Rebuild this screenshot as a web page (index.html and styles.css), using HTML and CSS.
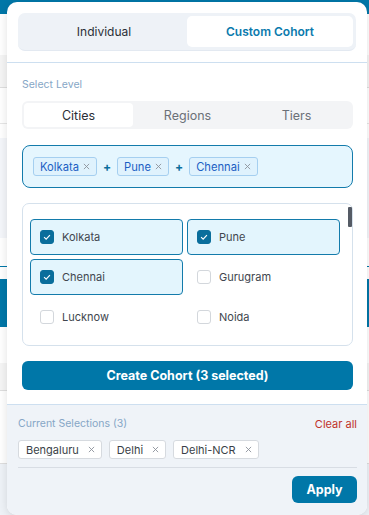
FILE: index.html
```html
<!DOCTYPE html>
<html lang="en">
<head>
    <meta charset="UTF-8">
    <meta name="viewport" content="width=device-width, initial-scale=1.0">
    <title>Custom Cohort</title>
    <link rel="stylesheet" href="styles.css">
</head>
<body>

    <!-- page behind the popover -->
    <div class="page">
        <div class="topbar"></div>
        <div class="band band-white-1"></div>
        <div class="band band-grey-1"></div>
        <div class="band band-white-2"></div>
        <div class="band band-light"></div>
        <div class="band band-white-3"></div>
        <div class="band band-blue"></div>
        <div class="band band-white-4"></div>
        <div class="band band-grey-2"></div>
        <div class="band band-white-5"></div>
        <div class="band band-foot"></div>
    </div>

    <div class="cohort-popover">
        <div class="mode-tabs">
            <button class="mode-tab">Individual</button>
            <button class="mode-tab active">Custom Cohort</button>
        </div>

        <div class="popover-body">
            <p class="field-label">Select Level</p>
            <div class="level-tabs">
                <button class="level-tab active">Cities</button>
                <button class="level-tab">Regions</button>
                <button class="level-tab">Tiers</button>
            </div>

            <div class="cohort-preview">
                <span class="preview-chip">Kolkata <svg class="chip-x" viewBox="0 0 8 8"><path d="M1 1L7 7M7 1L1 7"/></svg></span>
                <span class="plus">+</span>
                <span class="preview-chip">Pune <svg class="chip-x" viewBox="0 0 8 8"><path d="M1 1L7 7M7 1L1 7"/></svg></span>
                <span class="plus">+</span>
                <span class="preview-chip">Chennai <svg class="chip-x" viewBox="0 0 8 8"><path d="M1 1L7 7M7 1L1 7"/></svg></span>
            </div>

            <div class="city-list-wrap">
                <div class="city-list">
                    <label class="city-option checked"><span class="check"><svg viewBox="0 0 14 14"><path d="M3.6 7.2L6 9.5L10.4 4.8"/></svg></span>Kolkata</label>
                    <label class="city-option checked"><span class="check"><svg viewBox="0 0 14 14"><path d="M3.6 7.2L6 9.5L10.4 4.8"/></svg></span>Pune</label>
                    <label class="city-option checked"><span class="check"><svg viewBox="0 0 14 14"><path d="M3.6 7.2L6 9.5L10.4 4.8"/></svg></span>Chennai</label>
                    <label class="city-option"><span class="check"></span>Gurugram</label>
                    <label class="city-option"><span class="check"></span>Lucknow</label>
                    <label class="city-option"><span class="check"></span>Noida</label>
                </div>
                <div class="scroll-thumb"></div>
            </div>

            <button class="create-btn">Create Cohort (3 selected)</button>
        </div>

        <div class="selections">
            <div class="selections-head">
                <span class="field-label">Current Selections (3)</span>
                <a href="#" class="clear-all">Clear all</a>
            </div>
            <div class="selection-chips">
                <span class="sel-chip">Bengaluru <svg class="chip-x" viewBox="0 0 8 8"><path d="M1 1L7 7M7 1L1 7"/></svg></span>
                <span class="sel-chip">Delhi <svg class="chip-x" viewBox="0 0 8 8"><path d="M1 1L7 7M7 1L1 7"/></svg></span>
                <span class="sel-chip">Delhi-NCR <svg class="chip-x" viewBox="0 0 8 8"><path d="M1 1L7 7M7 1L1 7"/></svg></span>
            </div>
            <div class="selections-foot">
                <button class="apply-btn">Apply</button>
            </div>
        </div>
    </div>

</body>
</html>
```

FILE: styles.css
```css
* {
    margin: 0;
    padding: 0;
    box-sizing: border-box;
    font-family: "Inter", "Liberation Sans", sans-serif;
}

body {
    background: #fff;
    overflow: hidden;
    height: 515px;
    position: relative;
}

button {
    border: none;
    background: none;
    cursor: pointer;
    font: inherit;
}

/* Page behind the popover */
.topbar {
    height: 14px;
    background: #0077a8;
}

.band-white-1 { height: 41px; }
.band-grey-1 { height: 33px; background: #f5f5f5; border-bottom: 1px solid #dedede; }
.band-white-2 { height: 36px; border-bottom: 1px solid #e6e6e6; }
.band-white-3 { height: 29px; border-bottom: 1px solid #0077a8; }
.band-light { height: 100px; margin-top: 14px; background: #f4f6fa; }
.band-blue { height: 48px; margin-top: 12px; background: #0077a8; }
.band-white-4 { height: 36px; }
.band-grey-2 { height: 28px; background: #f5f5f5; border-bottom: 1px solid #dedede; }
.band-white-5 { height: 73px; border-bottom: 1px solid #dedede; }
.band-foot { height: 60px; background: #eef2f7; }

/* Popover */
.cohort-popover {
    position: absolute;
    top: 2px;
    left: 7px;
    width: 360px;
    height: 513px;
    background: #fff;
    border-radius: 10px;
    box-shadow: 0 2px 10px rgba(0, 0, 0, 0.12);
    display: flex;
    flex-direction: column;
    overflow: hidden;
}

.mode-tabs {
    display: flex;
    margin: 11px 11px 0;
    padding: 3px;
    height: 38px;
    background: #eef2f7;
    border-radius: 7px;
    border-bottom: 1px solid #e3e9f1;
}

.mode-tab {
    flex: 1;
    font-size: 12px;
    color: #2b2f36;
    border-radius: 5px;
}

.mode-tab.active {
    background: #fff;
    color: #0a7aad;
    font-weight: 600;
}

.popover-body {
    margin-top: 11px;
    border-top: 1px solid #cddff0;
    padding: 15px 14px 0 15px;
}

.field-label {
    font-size: 10.5px;
    line-height: 14px;
    color: #86a6c6;
}

.level-tabs {
    display: flex;
    margin-top: 9px;
    padding: 2px;
    height: 28px;
    background: #f3f4f6;
    border-radius: 6px;
}

.level-tab {
    flex: 1;
    font-size: 12.5px;
    color: #6b7078;
    border-radius: 4px;
}

.level-tab.active {
    background: #fff;
    color: #2b2f36;
}

.cohort-preview {
    display: flex;
    align-items: center;
    gap: 6px;
    margin-top: 16px;
    height: 43px;
    padding: 0 10px;
    background: #e5f6fe;
    border: 1px solid #137bab;
    border-radius: 8px;
}

.preview-chip {
    display: inline-flex;
    align-items: center;
    gap: 4px;
    height: 19px;
    padding: 0 6px;
    font-size: 11.2px;
    color: #1c5fc4;
    background: #dff2fd;
    border: 1px solid #a5cff0;
    border-radius: 3px;
}

.chip-x {
    width: 7px;
    height: 7px;
    fill: none;
    stroke: #8a9099;
    stroke-width: 1;
}

.plus {
    font-size: 12px;
    font-weight: 700;
    color: #0a6e9c;
}

/* City checklist */
.city-list-wrap {
    position: relative;
    margin-top: 15px;
}

.city-list {
    display: grid;
    grid-template-columns: 1fr 1fr;
    grid-auto-rows: 36px;
    gap: 4px;
    height: 143px;
    padding: 15px 12px 11px 7px;
    border: 1px solid #d5e1ec;
    border-radius: 7px;
    overflow: hidden;
}

.scroll-thumb {
    position: absolute;
    top: 4px;
    right: 1px;
    width: 4px;
    height: 20px;
    background: #555b65;
    border-radius: 1px;
}

.city-option {
    display: flex;
    align-items: center;
    gap: 8px;
    padding: 0 9px;
    font-size: 11px;
    color: #41464e;
    border: 1px solid transparent;
    border-radius: 4px;
}

.city-option.checked {
    background: #e3f5fd;
    border-color: #137bab;
}

.check {
    width: 14px;
    height: 14px;
    flex-shrink: 0;
    border: 1px solid #d3d7dc;
    border-radius: 3px;
    background: #fff;
}

.checked .check {
    background: #0a6e9c;
    border-color: #0a6e9c;
}

.check svg {
    display: block;
    width: 12px;
    height: 12px;
    fill: none;
    stroke: #fff;
    stroke-width: 1.3;
}

.create-btn {
    display: block;
    width: 100%;
    height: 29px;
    margin-top: 15px;
    background: #0077a8;
    color: #fff;
    font-size: 12.5px;
    font-weight: 700;
    border-radius: 6px;
}

/* Current selections */
.selections {
    flex: 1;
    margin-top: 14px;
    padding: 12px 10px 0 11px;
    background: #eff3f8;
    border-top: 1px solid #cddff0;
}

.selections-head {
    display: flex;
    justify-content: space-between;
    align-items: center;
}

.clear-all {
    font-size: 11px;
    color: #c0322b;
    text-decoration: none;
}

.selection-chips {
    display: flex;
    gap: 7px;
    margin-top: 9px;
    padding-bottom: 8px;
    border-bottom: 1px solid #d8dde4;
}

.sel-chip {
    display: inline-flex;
    align-items: center;
    gap: 9px;
    height: 19px;
    padding: 0 6px 0 7px;
    font-size: 11px;
    color: #3a3f47;
    background: #fff;
    border: 1px solid #d6dadf;
    border-radius: 3px;
}

.selections-foot {
    display: flex;
    justify-content: flex-end;
    margin-top: 8px;
}

.apply-btn {
    width: 65px;
    height: 27px;
    background: #0077a8;
    color: #fff;
    font-size: 12.5px;
    font-weight: 700;
    border-radius: 6px;
}
```
